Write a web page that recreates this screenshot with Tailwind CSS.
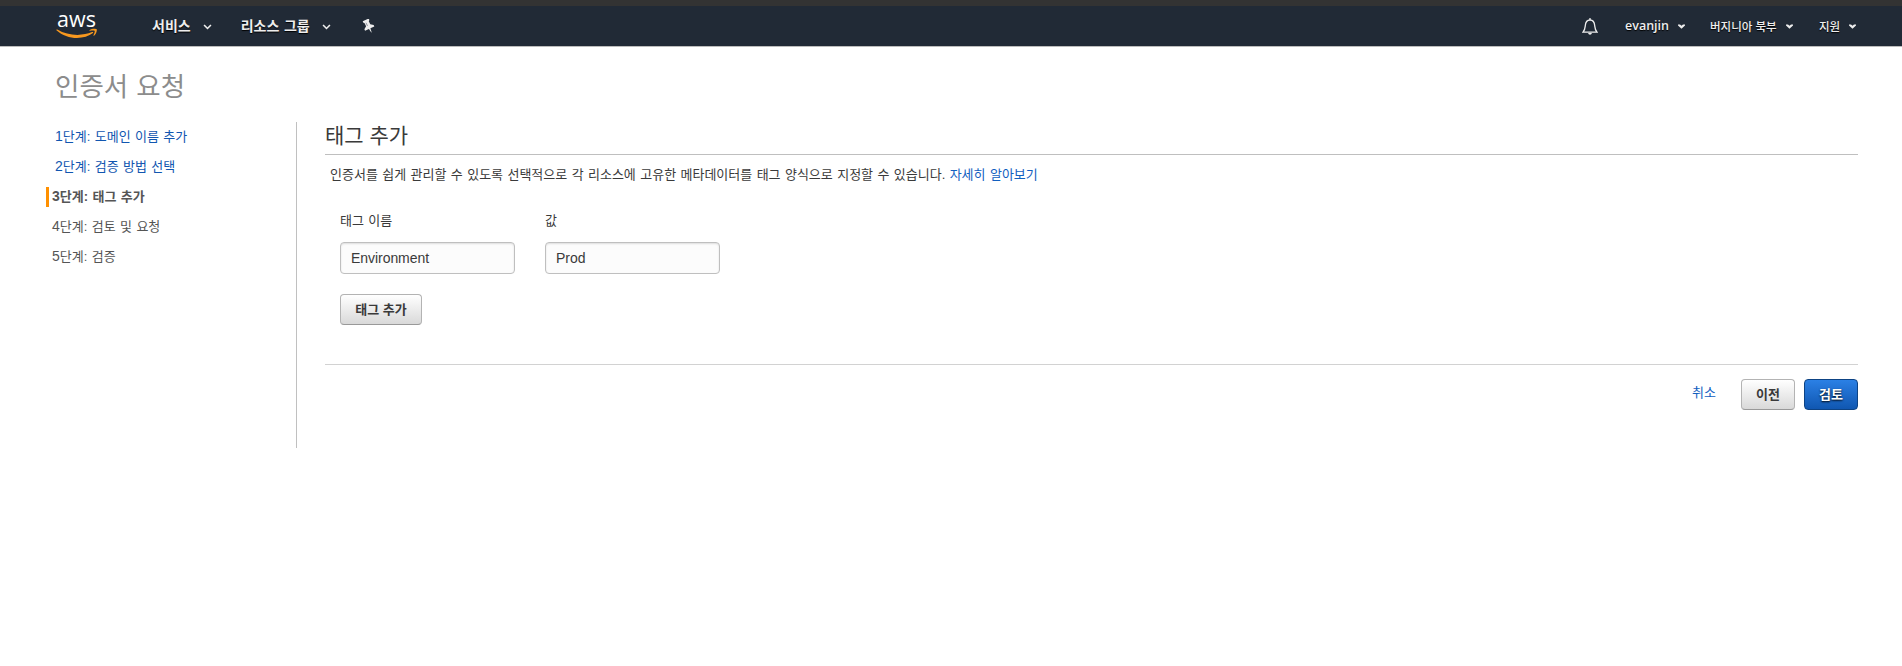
<!DOCTYPE html>
<html lang="ko">
<head>
<meta charset="utf-8">
<title>인증서 요청</title>
<script src="https://cdn.jsdelivr.net/npm/@tailwindcss/browser@4"></script>
</head>
<body class="min-h-screen bg-white font-['Liberation_Sans','Noto_Sans_CJK_KR',sans-serif] text-[13px] leading-5 text-[#3a3a3a] [word-spacing:.78px]">
<header class="h-[47px] border-t-[6px] border-b border-t-[#333] border-b-[#bcbcbc] bg-[#212a36] flex items-center justify-between pl-[56px] pr-[46px] text-[#eee] [text-shadow:0_1px_1px_#000]">
  <div class="flex items-center h-full">
    <div class="w-[41px] h-[25px] flex flex-col items-center">
      <span class="h-[14px] leading-[9px] text-[21.500px] font-medium font-['Open_Sans',sans-serif] text-white [text-shadow:none]">aws</span>
      <svg class="w-[41px] h-[11px] shrink-0 overflow-visible" viewBox="0 0 41 11" fill="#f7981f"><path d="M.4 2.2Q0 1.1 1.3 1.5C12 8 26 8.300 36 4.100Q37.800 3.600 37 5C28 12 11 12 .4 2.200Z"/><path d="M33.500 2.200C35.500.4 40 .3 40.700 1.200C41.300 3 39.700 6.500 38 7.700Q37.200 8 37.500 7.200C38.600 4.500 39.100 3.200 38.500 2.700C37.700 2.200 36 2.500 33.800 2.700Q33 2.700 33.500 2.200Z"/></svg>
    </div>
    <span class="ml-[55px] text-[14px] font-bold">서비스</span>
    <svg class="ml-[12px] mt-[2px] w-[9px] h-[6px]" viewBox="0 0 10 7" fill="none" stroke="#eee" stroke-width="1.9"><path d="M1 1.200 5 5.200 9 1.200"/></svg>
    <span class="ml-[29px] text-[14px] font-bold">리소스 그룹</span>
    <svg class="ml-[12px] mt-[2px] w-[9px] h-[6px]" viewBox="0 0 10 7" fill="none" stroke="#eee" stroke-width="1.9"><path d="M1 1.200 5 5.200 9 1.200"/></svg>
    <svg class="ml-[31px] w-[13px] h-[14px]" viewBox="0 0 13 14" fill="#eee"><g transform="rotate(-25 6.500 7)"><path d="M3.200.3H9.800V2L8.800 2.800V6.200L11.600 8.200V9.800H7.300L6.700 14H6.300L5.700 9.800H1.400V8.200L4.200 6.200V2.800L3.200 2Z"/><path d="M5.600 3V6.500" stroke="#667" stroke-width=".6"/></g></svg>
  </div>
  <div class="flex items-center text-[11.500px] font-medium [word-spacing:0]">
    <svg class="w-[16px] h-[17px]" viewBox="0 0 16 17" fill="none" stroke="#eee" stroke-width="1.300"><path d="M1 14.200C3 12 3 10.500 3.300 7.500C3.600 4 5.200 2 8 2S12.400 4 12.700 7.500C13 10.500 13 12 15 14.200Z"/><path d="M8 0V2"/><path d="M6 15h4Q9.500 16.800 8 16.800T6 15Z" fill="#eee" stroke="none"/></svg>
    <span class="ml-[27px] w-[44px] text-[12.500px] font-semibold font-['Open_Sans',sans-serif]">evanjin</span>
    <svg class="ml-[9px] mt-px w-[7px] h-[5px]" viewBox="0 0 7 5" fill="#eee"><path d="M0 .5H2L3.500 1.700 5 .5H7V1.500L3.500 4.800 0 1.500Z"/></svg>
    <span class="ml-[25px] w-[68px] mt-px whitespace-nowrap">버지니아 북부</span>
    <svg class="ml-[8px] mt-px w-[7px] h-[5px]" viewBox="0 0 7 5" fill="#eee"><path d="M0 .5H2L3.500 1.700 5 .5H7V1.500L3.500 4.800 0 1.500Z"/></svg>
    <span class="ml-[26px] w-[21px] mt-px whitespace-nowrap">지원</span>
    <svg class="ml-[9px] mt-px w-[7px] h-[5px]" viewBox="0 0 7 5" fill="#eee"><path d="M0 .5H2L3.500 1.700 5 .5H7V1.500L3.500 4.800 0 1.500Z"/></svg>
  </div>
</header>
<h1 class="mt-[20px] h-[40px] pl-[55px] leading-[40px] text-[26.500px] text-[#8c8c8c]">인증서 요청</h1>
<main class="mt-[15px] flex pr-[44px]">
  <nav class="w-[297px] h-[326px] pl-[46px] pt-[5px] border-r border-[#c0c0c0] flex flex-col gap-[10px] shrink-0 *:h-5 *:shrink-0 *:whitespace-nowrap">
    <a class="pl-[9px] text-[#1156b0]"><span class="text-[14px] leading-none">1</span>단계: 도메인 이름 추가</a>
    <a class="pl-[9px] text-[#1156b0]"><span class="text-[14px] leading-none">2</span>단계: 검증 방법 선택</a>
    <span class="border-l-[3px] border-[#ff9000] pl-[3px] font-bold text-[#555]"><span class="text-[14px] leading-none">3</span>단계: 태그 추가</span>
    <span class="pl-[6px] text-[#555]"><span class="text-[14px] leading-none">4</span>단계: 검토 및 요청</span>
    <span class="pl-[6px] text-[#555]"><span class="text-[14px] leading-none">5</span>단계: 검증</span>
  </nav>
  <section class="ml-[28px] flex-1">
    <h2 class="h-[33px] border-b border-[#bfbfbf] text-[21px] leading-[28px] [word-spacing:0]">태그 추가</h2>
    <p class="mt-[10px] pl-[5px]">인증서를 쉽게 관리할 수 있도록 선택적으로 각 리소스에 고유한 메타데이터를 태그 양식으로 지정할 수 있습니다. <a class="text-[#1260bf]">자세히 알아보기</a></p>
    <div class="mt-[26px] pl-[15px] flex gap-[30px]">
      <label class="w-[175px]">태그 이름<span class="mt-[11px] flex items-center h-[32px] px-[10px] border border-[#bfbfbf] rounded bg-[#fcfcfc] text-[14px] tracking-[-.05px] shadow-[inset_0_1px_2px_#ddd]">Environment</span></label>
      <label class="w-[175px]">값<span class="mt-[11px] flex items-center h-[32px] px-[10px] border border-[#bfbfbf] rounded bg-[#fcfcfc] text-[14px] shadow-[inset_0_1px_2px_#ddd]">Prod</span></label>
    </div>
    <button class="mt-[20px] ml-[15px] w-[82px] h-[31px] rounded border border-[#b3b3b3] border-b-[#999] bg-linear-to-b from-white to-[#d9d9d9] font-bold">태그 추가</button>
    <div class="mt-[39px] border-t border-[#d2d2d2] pt-[14px] flex justify-end">
      <a class="mt-[4px] mr-[25px] text-[#1260bf]">취소</a>
      <button class="w-[54px] h-[31px] mr-[9px] rounded border border-[#b3b3b3] border-b-[#999] bg-linear-to-b from-white to-[#d9d9d9] font-bold">이전</button>
      <button class="w-[54px] h-[31px] rounded border border-[#0d4384] bg-linear-to-b from-[#2b80e5] to-[#1057b1] font-bold text-white [text-shadow:0_1px_2px_#000]">검토</button>
    </div>
  </section>
</main>
</body>
</html>
